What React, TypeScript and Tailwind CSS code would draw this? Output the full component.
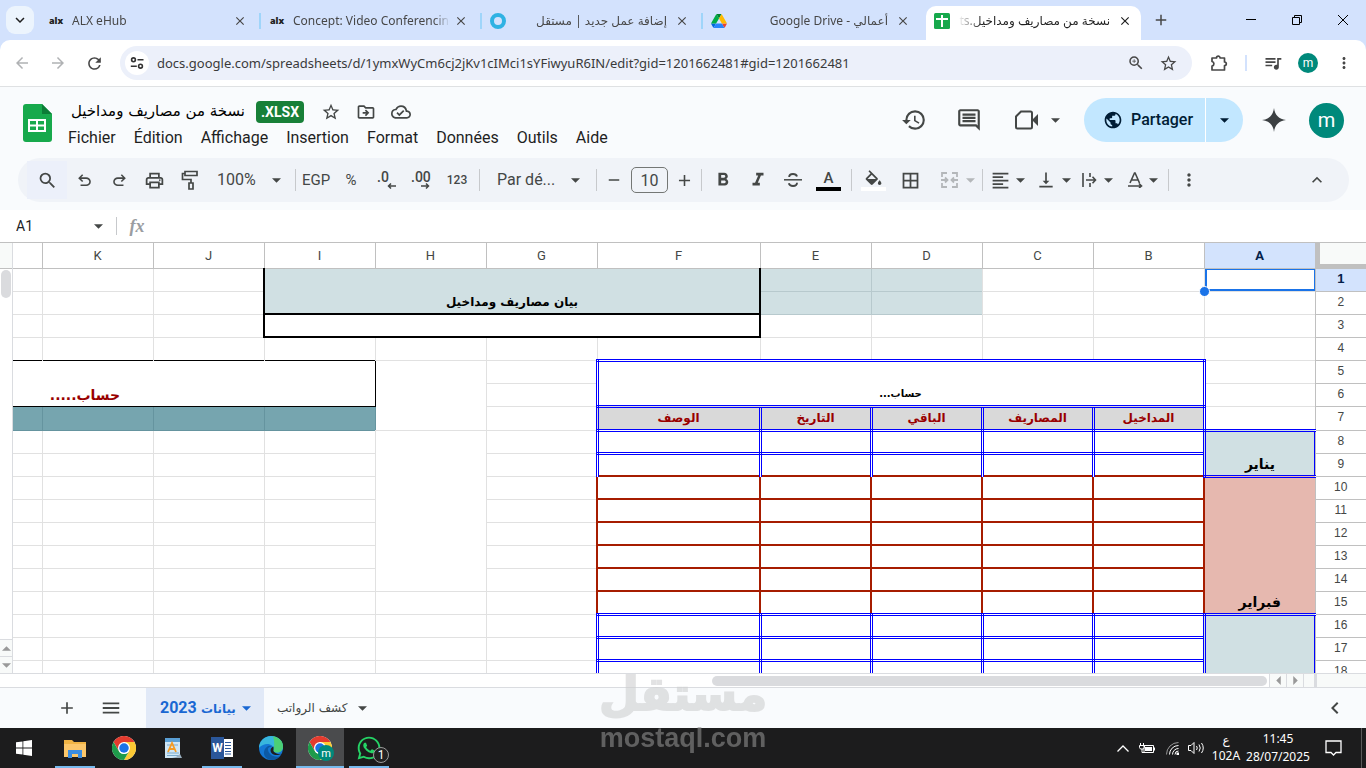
import React from "react";
import type { ReactNode } from "react";
import {
  MdAdd,
  MdArrowBack,
  MdArrowForward,
  MdBorderAll,
  MdClose,
  MdExpandLess,
  MdExpandMore,
  MdFormatAlignLeft,
  MdFormatBold,
  MdFormatItalic,
  MdHistory,
  MdMenu,
  MdMoreVert,
  MdOutlineCloudDone,
  MdOutlineComment,
  MdOutlineDriveFileMove,
  MdOutlinePrint,
  MdPublic,
  MdQueueMusic,
  MdRefresh,
  MdRemove,
  MdSearch,
  MdStarBorder,
  MdVerticalAlignBottom,
  MdZoomIn,
} from "react-icons/md";
import { FaWhatsapp } from "react-icons/fa";

/* ---------- small shared pieces ---------- */

function Caret({ className = "" }: { className?: string }) {
  return (
    <svg viewBox="0 0 10 5" className={`h-[5px] w-[9px] shrink-0 fill-current ${className}`}>
      <path d="M0 0h10L5 5z" />
    </svg>
  );
}

function IconButton({ label, className = "", children }: { label: string; className?: string; children: ReactNode }) {
  return (
    <button type="button" aria-label={label} className={`flex shrink-0 items-center justify-center ${className}`}>
      {children}
    </button>
  );
}

function SheetsFile({ className = "" }: { className?: string }) {
  return (
    <svg viewBox="0 0 29 38" className={className}>
      <path d="M3 0h16l10 10v25a3 3 0 0 1-3 3H3a3 3 0 0 1-3-3V3a3 3 0 0 1 3-3z" fill="#17a94c" />
      <path d="M19 0l10 10H19z" fill="#0c7c36" />
      <path d="M5 15h18v13H5zM7 17v3.500h6V17zm8 0v3.500h6V17zm-8 5.500V26h6v-3.500zm8 0V26h6v-3.500z" fill="#fff" fillRule="evenodd" />
    </svg>
  );
}

function ChromeLogo({ className = "" }: { className?: string }) {
  return (
    <svg viewBox="0 0 48 48" className={className}>
      <circle cx="24" cy="24" r="24" fill="#fff" />
      <path d="M24 12h20.800A24 24 0 0 0 3.200 12l10.400 18z" fill="#e33b2e" />
      <path d="M34.400 30L24 48a24 24 0 0 0 20.800-36H24z" fill="#fcc934" />
      <path d="M13.600 30L3.200 12A24 24 0 0 0 24 48l10.400-18a12 12 0 0 1-20.800 0z" fill="#1e9b4b" />
      <circle cx="24" cy="24" r="12" fill="#fff" />
      <circle cx="24" cy="24" r="9.500" fill="#1a73e8" />
    </svg>
  );
}

/* ---------- browser chrome ---------- */

const alxIcon = <span className="w-4 text-center text-[9px] leading-4 font-black text-[#222]">alx</span>;

const mostaqlIcon = (
  <svg viewBox="0 0 16 16" className="size-4">
    <circle cx="8" cy="8" r="6" fill="none" stroke="#2fb2e3" strokeWidth="4" />
  </svg>
);

const driveIcon = (
  <svg viewBox="0 0 87.300 78" className="h-[14px] w-4">
    <path d="M6.600 66.850l3.850 6.650c.8 1.400 1.950 2.500 3.300 3.300L27.500 53H0c0 1.550.4 3.100 1.200 4.500z" fill="#0066da" />
    <path d="M43.650 25L29.900 1.200c-1.350.8-2.500 1.900-3.300 3.300L1.200 48.500C.4 49.900 0 51.450 0 53h27.500z" fill="#00ac47" />
    <path d="M73.550 76.800c1.350-.8 2.500-1.900 3.300-3.300l1.600-2.750L86.100 57.500c.8-1.400 1.200-2.950 1.200-4.500H59.800l5.850 11.500z" fill="#ea4335" />
    <path d="M43.650 25L57.400 1.200C56.050.4 54.500 0 52.900 0H34.400c-1.600 0-3.150.45-4.500 1.200z" fill="#00832d" />
    <path d="M59.800 53H27.500L13.750 76.800c1.350.8 2.900 1.200 4.500 1.200h50.800c1.600 0 3.150-.45 4.500-1.200z" fill="#2684fc" />
    <path d="M73.400 26.500L60.700 4.500c-.8-1.400-1.950-2.500-3.300-3.300L43.650 25 59.800 53h27.450c0-1.550-.4-3.100-1.200-4.500z" fill="#ffba00" />
  </svg>
);

const sheetsTabIcon = (
  <svg viewBox="0 0 16 16" className="size-4">
    <rect width="16" height="16" rx="1.500" fill="#17a94c" />
    <path d="M7 2h2v12H7zM2 5h12v2H2z" fill="#fff" />
  </svg>
);

type BrowserTab = { title: string; icon: ReactNode; rtl?: boolean; active?: boolean; line?: boolean };

const browserTabs: BrowserTab[] = [
  { title: "ALX eHub", icon: alxIcon, line: true },
  { title: "Concept: Video Conferencing", icon: alxIcon, line: true },
  { title: "إضافة عمل جديد | مستقل", icon: mostaqlIcon, rtl: true, line: true },
  { title: "أعمالي - Google Drive", icon: driveIcon, rtl: true },
  { title: "نسخة من مصاريف ومداخيل.ts", icon: sheetsTabIcon, rtl: true, active: true },
];

function TabStrip() {
  return (
    <div className="flex h-10 shrink-0 bg-[#d3e2fd] font-['Noto_Sans','DejaVu_Sans',sans-serif] text-[12px] text-[#474747]">
      <div className="flex w-10 shrink-0 items-center pl-[6px]">
        <IconButton label="Rechercher dans les onglets" className="size-7 rounded-[9px] bg-[#ecf4fd] text-[#1f1f1f]">
          <MdExpandMore className="size-[18px]" />
        </IconButton>
      </div>
      {browserTabs.map((tab) => (
        <div key={tab.title} className="flex w-[221px] min-w-0 items-end">
          <div
            className={
              tab.active
                ? "ml-[2px] flex h-[34px] w-[215px] items-center rounded-t-[10px] bg-white pr-[9px] pb-1 pl-2 text-[#1f1f1f]"
                : "flex h-[34px] w-full items-center pb-1 pl-2"
            }
          >
            <span className="flex w-4 shrink-0 justify-center">{tab.icon}</span>
            <span
              dir={tab.rtl ? "rtl" : "ltr"}
              className={
                tab.rtl
                  ? "mr-2 ml-2 flex-1 overflow-hidden whitespace-nowrap [mask-image:linear-gradient(to_right,transparent,#000_24px)]"
                  : "mr-1 ml-2 flex-1 overflow-hidden whitespace-nowrap [mask-image:linear-gradient(to_left,transparent,#000_16px)]"
              }
            >
              {tab.title}
            </span>
            <IconButton label="Fermer l'onglet">
              <MdClose className="size-[14px]" />
            </IconButton>
            {!tab.active && <span className={tab.line ? "ml-3 h-4 w-[2px] bg-[#9fd5fa]" : "ml-3 h-4 w-[2px]"} />}
          </div>
        </div>
      ))}
      <IconButton label="Nouvel onglet" className="ml-px w-[30px]">
        <MdAdd className="size-[18px]" />
      </IconButton>
      <div className="ml-auto flex items-center text-black">
        <IconButton label="Réduire" className="h-full w-[46px]">
          <svg viewBox="0 0 10 10" className="size-[10px]"><path d="M0 4.500h10" stroke="currentColor" /></svg>
        </IconButton>
        <IconButton label="Restaurer" className="h-full w-[46px]">
          <svg viewBox="0 0 10 10" className="size-[10px]" fill="none" stroke="currentColor"><path d="M.5 2.500h7v7h-7zM2.500 2V.5h7v7H8" /></svg>
        </IconButton>
        <IconButton label="Fermer" className="h-full w-[46px]">
          <svg viewBox="0 0 10 10" className="size-[10px]"><path d="M0 0l10 10M10 0L0 10" stroke="currentColor" /></svg>
        </IconButton>
      </div>
    </div>
  );
}

function AddressBar() {
  return (
    <div className="bg-[#d3e2fd]">
      <div className="flex h-[47px] items-center rounded-t-[10px] border-b border-[#dfe1e3] bg-white pl-1 text-[#474747]">
        <IconButton label="Retour" className="w-9 text-[#b0b2b4]"><MdArrowBack className="size-[18px]" /></IconButton>
        <IconButton label="Avancer" className="w-9 text-[#b0b2b4]"><MdArrowForward className="size-[18px]" /></IconButton>
        <IconButton label="Actualiser" className="w-9"><MdRefresh className="size-[19px]" /></IconButton>
        <div className="ml-2 flex h-[34px] flex-1 items-center rounded-full bg-[#ecf0fa] pr-2 pl-[5px]">
          <IconButton label="Informations sur le site" className="size-6 rounded-full bg-white">
            <svg viewBox="0 0 14 14" className="size-[14px]" fill="none" stroke="#333" strokeWidth="1.600">
              <circle cx="3.500" cy="3.800" r="1.900" />
              <circle cx="10.500" cy="10.200" r="1.900" />
              <path d="M7.500 3.800h6M.8 10.200h6" />
            </svg>
          </IconButton>
          <input
            aria-label="Barre d'adresse"
            defaultValue="docs.google.com/spreadsheets/d/1ymxWyCm6cj2jKv1cIMci1sYFiwyuR6IN/edit?gid=1201662481#gid=1201662481"
            className="ml-2 h-6 min-w-0 flex-1 bg-transparent font-['Noto_Sans',sans-serif] text-[13px] text-[#3a3a3a] outline-none"
          />
          <IconButton label="Zoom" className="w-8"><MdZoomIn className="size-[18px]" /></IconButton>
          <IconButton label="Ajouter aux favoris" className="w-8"><MdStarBorder className="size-[19px]" /></IconButton>
        </div>
        <IconButton label="Extensions" className="ml-2 w-[37px]">
          <svg viewBox="0 0 18 18" className="size-[18px]" fill="none" stroke="currentColor" strokeWidth="1.700" strokeLinejoin="round">
            <path d="M2 4h4.500a1.800 1.800 0 0 1 3.600 0H14.500v4a1.800 1.800 0 0 1 0 3.600V16H2v-3.800a2.400 2.400 0 0 0 0-4.700z" />
          </svg>
        </IconButton>
        <span className="mx-2 h-4 w-[2px] bg-[#d3e2fd]" />
        <IconButton label="Commandes multimédias" className="w-[35px]"><MdQueueMusic className="size-[20px]" /></IconButton>
        <IconButton label="Profil" className="mx-2 size-5 rounded-full bg-[#00897b] font-[Roboto,sans-serif] text-[12px] text-white">m</IconButton>
        <IconButton label="Menu Chrome" className="mr-[6px] ml-[2px] w-8"><MdMoreVert className="size-[18px]" /></IconButton>
      </div>
    </div>
  );
}

/* ---------- document header ---------- */

const menus = ["Fichier", "Édition", "Affichage", "Insertion", "Format", "Données", "Outils", "Aide"];

function DocHeader() {
  return (
    <header className="flex h-[71px] shrink-0 items-start bg-[#f9fbfd] pt-[11px] pr-[22px] pl-[23px] text-[#444746]">
      <SheetsFile className="mt-[6px] h-[38px] w-[29px] shrink-0" />
      <div className="ml-[15px]">
        <div className="flex h-7 items-center">
          <input
            aria-label="Titre du document"
            dir="rtl"
            defaultValue="نسخة من مصاريف ومداخيل"
            className="h-7 w-[178px] bg-transparent pb-[2px] font-['DejaVu_Sans',sans-serif] text-[15px] text-black outline-none"
          />
          <span className="ml-[11px] flex h-[22px] w-12 items-center justify-center rounded bg-[#188038] font-[Roboto,sans-serif] text-[14px] font-bold text-white">.XLSX</span>
          <IconButton label="Suivre" className="ml-[9px] w-[35px]"><MdStarBorder className="size-[20px]" /></IconButton>
          <IconButton label="Déplacer" className="w-[35px]"><MdOutlineDriveFileMove className="size-[20px]" /></IconButton>
          <IconButton label="État du document" className="w-[35px]"><MdOutlineCloudDone className="size-[20px]" /></IconButton>
        </div>
        <nav className="flex h-6 items-center gap-[18px] pl-px font-[Roboto,sans-serif] text-[16px] text-[#1f1f1f]">
          {menus.map((m) => (
            <button key={m} type="button">{m}</button>
          ))}
        </nav>
      </div>
      <div className="ml-auto flex h-11 items-center">
        <IconButton label="Historique" className="w-[55px]"><MdHistory className="size-[26px]" /></IconButton>
        <IconButton label="Commentaires" className="w-[55px]"><MdOutlineComment className="size-[26px]" /></IconButton>
        <button type="button" aria-label="Appel vidéo" className="flex w-16 items-center justify-end gap-3">
          <svg viewBox="0 0 24 20" className="h-5 w-6" fill="none" stroke="currentColor" strokeWidth="2">
            <path d="M6 1.500h9.500a1.500 1.500 0 0 1 1.500 1.500v14a1.500 1.500 0 0 1-1.500 1.500h-13A1.500 1.500 0 0 1 1 17V6.500z" />
            <path d="M17 10l6-6v12z" fill="currentColor" stroke="none" />
          </svg>
          <Caret className="h-1 w-2" />
        </button>
        <div className="ml-6 flex h-11 w-[159px] overflow-hidden rounded-full bg-[#c2e7ff] text-[#001d35]">
          <button type="button" className="flex flex-1 items-center gap-2 border-r border-white pl-[19px] font-[Roboto,sans-serif] text-[16px] font-medium">
            <MdPublic className="size-5 shrink-0" />
            Partager
          </button>
          <IconButton label="Options de partage" className="w-[37px]"><Caret className="h-1 w-2" /></IconButton>
        </div>
        <IconButton label="Gemini" className="ml-[19px] w-6">
          <svg viewBox="0 0 24 24" className="size-6 fill-[#3c4043]"><path d="M12 0c.8 7 5 11.200 12 12-7 .8-11.200 5-12 12-.8-7-5-11.200-12-12C7 11.200 11.200 7 12 0z" /></svg>
        </IconButton>
        <IconButton label="Compte Google" className="ml-[23px] size-[35px] rounded-full bg-[#00897b] font-[Roboto,sans-serif] text-[20px] text-white">m</IconButton>
      </div>
    </header>
  );
}

function Rule() {
  return <span className="h-[22px] w-px shrink-0 bg-[#c7c9cc]" />;
}

const undoPath =
  "M7 19v-2h7.100q1.575 0 2.738-1T18 13.500t-1.162-2.500T14.100 10H7.800l2.600 2.600L9 14 4 9l5-5 1.400 1.400L7.800 8h6.300q2.425 0 4.163 1.575T20 13.500t-1.737 3.925T14.100 19z";

function Decimal({ text, back }: { text: string; back?: boolean }) {
  return (
    <span className="flex w-[19px] flex-col items-start font-[Roboto,sans-serif] text-[14px] leading-3 font-medium">
      {text}
      <svg viewBox="0 0 9 6" className="h-[6px] w-[9px] self-end" fill="none" stroke="currentColor" strokeWidth="1.500">
        <path d={back ? "M9 3H1.500M4 .5L1.500 3 4 5.500" : "M0 3h7.500M5 .5L7.500 3 5 5.500"} />
      </svg>
    </span>
  );
}

function Toolbar() {
  return (
    <div className="shrink-0 bg-[#f9fbfd] pr-[17px] pb-2 pl-[18px]">
      <div className="flex h-11 items-center rounded-full bg-[#f0f3f8] pr-[14px] pl-[9px] font-[Roboto,sans-serif] text-[16px] text-[#444746]">
        <IconButton label="Rechercher" className="h-[38px] w-10 bg-[#ecf0fa]"><MdSearch className="size-[21px]" /></IconButton>
        <IconButton label="Annuler" className="w-[35px]"><svg viewBox="0 0 24 24" className="size-[19px] fill-current"><path d={undoPath} /></svg></IconButton>
        <IconButton label="Rétablir" className="w-[35px]"><svg viewBox="0 0 24 24" className="size-[19px] -scale-x-100 fill-current"><path d={undoPath} /></svg></IconButton>
        <IconButton label="Imprimer" className="w-[35px]"><MdOutlinePrint className="size-[21px]" /></IconButton>
        <IconButton label="Copier la mise en forme" className="w-[35px]">
          <svg viewBox="0 0 18 20" className="h-5 w-[18px]" fill="none" stroke="currentColor" strokeWidth="1.700">
            <path d="M4 1.500h12v4H4zM4 3.500H1.500v6H10v3.500M8 13h4v6H8z" />
          </svg>
        </IconButton>
        <button type="button" className="flex w-[88px] items-center justify-between pr-[14px] pl-[10px]">100% <Caret /></button>
        <Rule />
        <button type="button" className="w-10 text-[15px]">EGP</button>
        <button type="button" className="w-[30px] text-[15px]">%</button>
        <IconButton label="Réduire les décimales" className="w-[37px] pl-1"><Decimal text=".0" back /></IconButton>
        <IconButton label="Augmenter les décimales" className="w-[35px]"><Decimal text=".00" /></IconButton>
        <button type="button" className="w-[38px] text-[12px] font-medium">123</button>
        <span className="w-[3px]" />
        <Rule />
        <button type="button" className="flex w-[116px] items-center justify-between pr-4 pl-[17px]">Par dé... <Caret /></button>
        <Rule />
        <IconButton label="Réduire la taille" className="w-[34px]"><MdRemove className="size-[18px]" /></IconButton>
        <input aria-label="Taille de police" defaultValue="10" className="h-[26px] w-[37px] rounded-[5px] border border-[#747775] bg-transparent text-center text-[16px] outline-none" />
        <IconButton label="Augmenter la taille" className="w-[33px]"><MdAdd className="size-[19px]" /></IconButton>
        <Rule />
        <IconButton label="Gras" className="ml-[3px] w-[35px]"><MdFormatBold className="size-[22px]" /></IconButton>
        <IconButton label="Italique" className="w-[35px]"><MdFormatItalic className="size-[22px]" /></IconButton>
        <IconButton label="Barré" className="w-[35px]">
          <svg viewBox="0 0 18 16" className="h-4 w-[18px]" fill="none" stroke="currentColor" strokeWidth="1.900">
            <path d="M13 4.500C12.500 2.800 11 2 9 2 6.800 2 5.200 3 5.200 5M13 10.800c0 2-1.600 3.200-4 3.200-2.200 0-3.700-.9-4.200-2.700" />
            <path d="M0 7.800h18" strokeWidth="1.500" />
          </svg>
        </IconButton>
        <button type="button" aria-label="Couleur du texte" className="flex w-[37px] flex-col items-center text-[15px] leading-4 font-medium">
          A<span className="mt-px h-1 w-[25px] bg-black" />
        </button>
        <span className="w-1" />
        <Rule />
        <IconButton label="Couleur de remplissage" className="ml-[3px] w-[37px] flex-col">
          <svg viewBox="0 0 24 18" className="mb-px h-4 w-[21px] fill-current">
            <path d="M16.560 8.940L7.620 0 6.210 1.410l2.380 2.380-5.150 5.150a1.490 1.490 0 0 0 0 2.120l5.500 5.500c.29.29.68.44 1.060.44s.77-.15 1.060-.44l5.500-5.500c.59-.58.59-1.530 0-2.120zM5.210 10L10 5.210 14.790 10zM19 11.500s-2 2.170-2 3.500c0 1.100.9 2 2 2s2-.9 2-2c0-1.330-2-3.500-2-3.500z" />
          </svg>
          <span className="h-1 w-[25px] bg-white" />
        </IconButton>
        <IconButton label="Bordures" className="w-[37px]"><MdBorderAll className="size-[21px]" /></IconButton>
        <IconButton label="Fusionner" className="w-[53px] gap-2 pl-1 text-[#b4b7ba]">
          <svg viewBox="0 0 17 16" className="h-4 w-[17px]" fill="none" stroke="currentColor" strokeWidth="1.800">
            <path d="M6 1H1v4M1 11v4h5M11 1h5v4M16 11v4h-5M0 8h6M4 5.500L6.500 8 4 10.500M17 8h-6M13 5.500L10.500 8l2.500 2.500" />
          </svg>
          <Caret />
        </IconButton>
        <Rule />
        <IconButton label="Alignement horizontal" className="w-[49px] gap-[5px]"><MdFormatAlignLeft className="size-[21px]" /><Caret /></IconButton>
        <IconButton label="Alignement vertical" className="w-[43px] gap-[6px]"><MdVerticalAlignBottom className="size-[20px]" /><Caret /></IconButton>
        <IconButton label="Retour à la ligne" className="w-[45px] gap-[7px]">
          <svg viewBox="0 0 15 14" className="h-[14px] w-[15px]" fill="none" stroke="currentColor" strokeWidth="1.600"><path d="M1 0v14M8 0v4M8 10v4M4 7h9M10.500 3.800L13.500 7l-3 3.200" /></svg>
          <Caret />
        </IconButton>
        <IconButton label="Rotation du texte" className="w-[45px] gap-[6px]">
          <svg viewBox="0 0 15 16" className="h-4 w-[15px]" fill="none" stroke="currentColor" strokeWidth="1.600"><path d="M2 11L6.500 1h.6L11.500 11M3.500 8h6.500M0 14h13M11 11.500l2.500 2.500-2.500 2" /></svg>
          <Caret />
        </IconButton>
        <span className="w-[3px]" />
        <Rule />
        <IconButton label="Plus" className="w-[39px]"><MdMoreVert className="size-[20px]" /></IconButton>
        <IconButton label="Masquer les menus" className="ml-auto w-9"><MdExpandLess className="size-[20px]" /></IconButton>
      </div>
    </div>
  );
}

function FormulaBar() {
  return (
    <div className="flex h-8 shrink-0 items-center bg-white">
      <input aria-label="Zone de nom" defaultValue="A1" className="w-[94px] pl-4 font-[Roboto,sans-serif] text-[14px] text-[#202124] outline-none" />
      <Caret className="text-[#444746]" />
      <span className="ml-[13px] h-[18px] w-px bg-[#c7c9cc]" />
      <label htmlFor="formula" className="w-10 text-center font-['Liberation_Serif',serif] text-[18px] font-bold text-[#9a9da1] italic">fx</label>
      <input id="formula" className="min-w-0 flex-1 outline-none" />
    </div>
  );
}

/* ---------- spreadsheet ---------- */

const grid = "border-b border-l border-[#e1e1e1]";
const shaded = "border-b border-l border-[#b7c9cd] bg-[#d0e0e3]";
const thick = "border-2 border-black";
const blue = "border-[3px] border-double border-[#0000ff]";
const blueOpen = "border-[3px] border-b-0 border-double border-[#0000ff]";
const red = "border-2 border-[#a61c00]";
const teal = "border-b border-l border-[#65949f] bg-[#76a5af]";
const label = "px-0 pt-0 pb-[2px] align-bottom text-center font-['DejaVu_Sans',sans-serif] font-bold leading-[18px]";

const columns = ["A", "B", "C", "D", "E", "F", "G", "H", "I", "J", "K", "L"];

function cellsOf(names: string[], cls: string) {
  return names.map((n) => <td key={n} className={cls} />);
}

const headings = ["المداخيل", "المصاريف", "الباقي", "التاريخ", "الوصف"];

function rowCells(row: number): ReactNode {
  if (row === 1) {
    return (
      <>
        <td className={`relative ${grid}`}>
          <span className="absolute inset-0 border-t border-r border-b-2 border-l-2 border-[#1a73e8]" />
          <span className="absolute -bottom-[6px] -left-[6px] size-[11px] rounded-full border border-white bg-[#1a73e8]" />
        </td>
        {cellsOf(["B", "C"], grid)}
        {cellsOf(["D", "E"], shaded)}
        <td colSpan={4} rowSpan={2} className={`border-2 border-t-0 border-black bg-[#d0e0e3] text-[12px] ${label}`}>بيان مصاريف ومداخيل</td>
        {cellsOf(["J", "K", "L"], grid)}
      </>
    );
  }
  if (row === 2) {
    return (
      <>
        {cellsOf(["A", "B", "C"], grid)}
        {cellsOf(["D", "E"], shaded)}
        {cellsOf(["J", "K", "L"], grid)}
      </>
    );
  }
  if (row === 3) {
    return (
      <>
        {cellsOf(["A", "B", "C", "D", "E"], grid)}
        <td colSpan={4} className={thick} />
        {cellsOf(["J", "K", "L"], grid)}
      </>
    );
  }
  if (row === 4) {
    return (
      <>
        {cellsOf(columns.slice(0, 8), grid)}
        {cellsOf(columns.slice(8), "border-l border-[#e1e1e1]")}
      </>
    );
  }
  if (row === 5) {
    return (
      <>
        <td className={grid} />
        <td colSpan={5} rowSpan={2} className={`${blue} text-[10px] ${label}`}>حساب...</td>
        <td className={grid} />
        <td rowSpan={3} className="border-b border-[#e1e1e1]" />
        <td colSpan={4} rowSpan={2} className={`border border-black text-[14px] text-[#990000] ${label}`}>حساب.....</td>
      </>
    );
  }
  if (row === 6) return cellsOf(["A", "G"], grid);
  if (row === 7) {
    return (
      <>
        <td className={grid} />
        {headings.map((h) => (
          <th key={h} scope="col" className={`${blue} bg-[#d9d9d9] text-[12px] text-[#990000] ${label}`}>{h}</th>
        ))}
        <td className={grid} />
        <td className="border-r border-b border-l border-[#65949f] bg-[#76a5af]" />
        {cellsOf(["J", "K", "L"], teal)}
      </>
    );
  }
  const month =
    row === 8 ? (
      <td rowSpan={2} className={`border-y-[3px] border-l-[3px] border-double border-[#0000ff] bg-[#d0e0e3] text-[14px] shadow-[inset_-1px_0_0_#0000ff] ${label}`}>يناير</td>
    ) : row === 10 ? (
      <td rowSpan={6} className={`bg-[#e6b8af] text-[14px] ${label}`}>فبراير</td>
    ) : row === 16 ? (
      <td rowSpan={3} className="border-t-[3px] border-l-[3px] border-double border-[#0000ff] bg-[#d0e0e3] shadow-[inset_-1px_0_0_#0000ff]" />
    ) : null;
  const entry = row === 9 ? blueOpen : row >= 10 && row <= 15 ? red : blue;
  return (
    <>
      {month}
      {cellsOf(columns.slice(1, 6), entry)}
      <td className={grid} />
      {row === 8 && <td rowSpan={7} className={grid} />}
      {row > 14 && <td className={grid} />}
      {cellsOf(columns.slice(8), grid)}
    </>
  );
}

function Grid() {
  return (
    <div className="flex min-h-0 flex-1 border-t border-[#c0c0c0] bg-white">
      <div className="flex w-[13px] shrink-0 flex-col border-r border-[#dadce0]">
        <div className="h-[26px] border-b border-[#c0c0c0] bg-[#f8faf9]" />
        <div className="mx-px mt-px h-7 rounded-full bg-[#dadbde]" />
        <IconButton label="Défiler vers le haut" className="mt-auto h-[17px] border-t border-[#dadce0] bg-[#f8faf9] text-[#999]"><Caret className="h-[3px] w-[6px] rotate-180" /></IconButton>
        <IconButton label="Défiler vers le bas" className="h-[17px] border-t border-[#dadce0] bg-[#f8faf9] text-[#999]"><Caret className="h-[3px] w-[6px]" /></IconButton>
      </div>
      <div dir="rtl" className="min-w-0 flex-1 overflow-hidden">
        <table className="w-[1571px] table-fixed border-collapse">
          <colgroup>
            <col className="w-[51px]" />
            {columns.map((c) => (
              <col key={c} className={c === "F" ? "w-[163px]" : c === "L" ? "w-[247px]" : "w-[111px]"} />
            ))}
          </colgroup>
          <thead>
            <tr className="h-[25px] font-[Roboto,sans-serif] text-[13px] text-[#444746]">
              <td className="border-b border-l border-[#c0c0c0] bg-[#f8faf9] shadow-[inset_4px_-4px_0_#c0c0c0]" />
              {columns.map((c) => (
                <th
                  key={c}
                  scope="col"
                  className={
                    c === "A"
                      ? "border-b border-l border-[#c0c0c0] bg-[#d3e3fd] p-0 font-bold text-[#041e49]"
                      : "border-b border-l border-[#c0c0c0] p-0 font-normal"
                  }
                >
                  {c === "L" ? null : c}
                </th>
              ))}
            </tr>
          </thead>
          <tbody className="text-black">
            {Array.from({ length: 18 }, (_, i) => i + 1).map((row) => (
              <tr key={row} className={row === 7 ? "h-6" : "h-[23px]"}>
                <th
                  scope="row"
                  className={
                    row === 1
                      ? "border-b border-l border-[#c0c0c0] bg-[#d3e3fd] px-0 pt-0 pb-[2px] font-['Liberation_Sans',sans-serif] text-[13px] leading-4 font-bold text-[#041e49]"
                      : "border-b border-l border-[#c0c0c0] px-0 pt-0 pb-[2px] font-['Liberation_Sans',sans-serif] text-[12px] leading-4 font-normal text-[#444746]"
                  }
                >
                  {row}
                </th>
                {rowCells(row)}
              </tr>
            ))}
          </tbody>
        </table>
      </div>
    </div>
  );
}

function HorizontalScroll() {
  return (
    <div className="flex h-[15px] shrink-0 border-y border-[#dadce0] bg-white">
      <div className="flex flex-1 items-center justify-end"><span className="mr-[2px] h-[10px] w-[555px] rounded-full bg-[#dadbde]" /></div>
      <IconButton label="Défiler à gauche" className="w-[17px] border-l border-[#dadce0] bg-[#f8faf9] text-[#999]"><Caret className="h-[3px] w-[6px] rotate-90" /></IconButton>
      <IconButton label="Défiler à droite" className="w-[17px] border-l border-[#dadce0] bg-[#f8faf9] text-[#999]"><Caret className="h-[3px] w-[6px] -rotate-90" /></IconButton>
      <span className="w-[11px] border-l border-[#dadce0] bg-[#f8faf9]" />
      <span className="w-[52px] border-l-[3px] border-[#dadce0] bg-[#f8faf9]" />
    </div>
  );
}

function SheetTabs() {
  return (
    <div className="flex h-10 shrink-0 items-center bg-[#f9fbfd] pl-[49px] font-['DejaVu_Sans',sans-serif] text-[12px] text-[#444746]">
      <IconButton label="Ajouter une feuille" className="w-9"><MdAdd className="size-[20px]" /></IconButton>
      <IconButton label="Toutes les feuilles" className="ml-2 w-9"><MdMenu className="size-[22px]" /></IconButton>
      <button type="button" className="ml-[17px] flex h-full w-[118px] items-center justify-between bg-[#e1e9f7] pr-[13px] pl-[14px] font-bold text-[#1967d2]">
        <span dir="rtl" className="whitespace-nowrap">بيانات <span className="font-[Roboto,sans-serif] text-[16px]">2023</span></span>
        <Caret />
      </button>
      <button type="button" className="flex h-full items-center gap-[10px] pl-[13px]">
        <span dir="rtl" className="whitespace-nowrap">كشف الرواتب</span>
        <Caret />
      </button>
      <IconButton label="Afficher le panneau latéral" className="mr-[19px] ml-auto w-6"><MdExpandLess className="size-6 -rotate-90" /></IconButton>
    </div>
  );
}

/* ---------- desktop task bar ---------- */

const folderIcon = (
  <svg viewBox="0 0 22 19" className="h-[19px] w-[22px]">
    <path d="M0 1h8l2 2h12v15H0z" fill="#f0b445" />
    <path d="M0 5h22v13H0z" fill="#fbc76b" />
    <path d="M4 19v-8h14v8h-4v-4H8v4z" fill="#3b8de0" />
  </svg>
);

const wordpadIcon = (
  <svg viewBox="0 0 18 22" className="h-[22px] w-[18px]">
    <path d="M1 1h15v20H1z" fill="#cfe6f5" />
    <path d="M1 1h15v4H1z" fill="#5a9fd4" />
    <path d="M3 8h11M3 16h12M3 18.500h12" stroke="#7aa9cb" />
    <path d="M4 15L8 6l4 9M5.500 12h5" fill="none" stroke="#f59b23" strokeWidth="1.800" />
    <path d="M12 20l4-3 2 4H8z" fill="#9bb0c0" />
  </svg>
);

const wordIcon = (
  <span className="flex h-[22px] w-[22px] items-center">
    <span className="flex h-[22px] w-[13px] items-center justify-center bg-[#2b579a] font-[Roboto,sans-serif] text-[12px] font-bold text-white">W</span>
    <svg viewBox="0 0 9 18" className="h-[18px] w-[9px]"><path d="M0 0h9v18H0z" fill="#fff" /><path d="M1 3.500h6M1 6.500h6M1 9.500h6M1 12.500h6M1 15h6" stroke="#2b579a" /></svg>
  </span>
);

const edgeIcon = (
  <svg viewBox="0 0 24 24" className="size-6">
    <circle cx="12" cy="12" r="12" fill="#1477d4" />
    <path d="M0 12C0 5 5.500 0 12 0s12 4.500 12 10.500c0 4-3 6-6 6-2.500 0-4-1-3.500-2.500C15.500 9 9 6.500 4 9c-2 1-3.500 2-4 3z" fill="#38b6dd" />
    <path d="M14 .2C20 1 24 5 24 10.500c0 4-3 6-6 6-2.500 0-4-1-3.500-2.500C16 10 15 3 14 .2z" fill="#4bcf74" />
    <path d="M9 13c0 5 5 8.500 11 7.500l2-1.500c-3 5-10 6.500-14 3.500-4.500-3-4-9.500 1-12.500 0 0 2-1 4 .5-2 0-4 1-4 2.500z" fill="#0c59a4" />
    <path d="M14.500 10.500c-3 1-4 4.500-1.500 7 2.500 2 7 2 9.500 0-1 .8-3 1-5 0-3-1-3.500-3-3-4z" fill="#1e1e1e" />
  </svg>
);

const profileChromeIcon = (
  <span className="relative">
    <ChromeLogo className="size-6" />
    <span className="absolute top-[9px] left-[10px] flex size-4 items-center justify-center rounded-full bg-[#00897b] font-[Roboto,sans-serif] text-[11px] leading-none text-white">m</span>
  </span>
);

const whatsappIcon = (
  <span className="relative">
    <FaWhatsapp className="size-[26px] text-[#25d366]" />
    <span className="absolute top-[12px] left-[17px] flex size-4 items-center justify-center rounded-full border border-[#9a9a9a] bg-[#222] font-[Roboto,sans-serif] text-[12px] leading-none text-white">1</span>
  </span>
);

const apps = [
  { name: "Explorateur de fichiers", icon: folderIcon, style: "after:w-10" },
  { name: "Google Chrome", icon: <ChromeLogo className="size-6" />, style: "after:w-0" },
  { name: "WordPad", icon: wordpadIcon, style: "after:w-0" },
  { name: "Word", icon: wordIcon, style: "after:w-10" },
  { name: "Microsoft Edge", icon: edgeIcon, style: "after:w-0" },
  { name: "Google Chrome, profil m", icon: profileChromeIcon, style: "bg-[#4a4b4d] after:w-12" },
  { name: "WhatsApp", icon: whatsappIcon, style: "after:w-10" },
];

function TaskBar() {
  return (
    <footer className="flex h-10 shrink-0 items-center bg-[#1c1c1d] font-['Noto_Sans','DejaVu_Sans',sans-serif] text-[12px] text-white">
      <IconButton label="Démarrer" className="mr-[3px] h-full w-12">
        <svg viewBox="0 0 16 16" className="size-4 fill-white"><path d="M0 2.300L6.500 1.400v6.200H0zM7.300 1.300L16 0v7.600H7.300zM0 8.400h6.500v6.200L0 13.700zM7.300 8.400H16V16l-8.700-1.200z" /></svg>
      </IconButton>
      <div className="flex h-full gap-px">
        {apps.map((app) => (
          <button
            key={app.name}
            type="button"
            aria-label={app.name}
            className={`relative flex w-12 items-center justify-center after:absolute after:bottom-0 after:h-[2px] after:bg-[#76b9ed] ${app.style}`}
          >
            {app.icon}
          </button>
        ))}
      </div>
      <div className="ml-auto flex h-full items-center">
        <IconButton label="Icônes cachées" className="w-6">
          <svg viewBox="0 0 12 7" className="h-[7px] w-3" fill="none" stroke="#fff" strokeWidth="1.300"><path d="M.5 6.500L6 1l5.500 5.500" /></svg>
        </IconButton>
        <IconButton label="Batterie" className="w-6">
          <svg viewBox="0 0 16 11" className="h-[11px] w-4" fill="none" stroke="#fff">
            <path d="M5 2.500h9.500v7h-9.500zM15.500 4.500v3M1.500 0v2M4.500 0v2M.5 2.500h5v2l-1 1.500h-3l-1-1.500zM3 6v3.500h2" />
            <path d="M6 4h7v4H6z" fill="#fff" stroke="none" />
          </svg>
        </IconButton>
        <IconButton label="Wi-Fi" className="ml-px w-6">
          <svg viewBox="0 0 13 13" className="size-[13px]" fill="none" stroke="#fff">
            <path d="M.5 12.500a12 12 0 0 1 12-12" stroke="#999" />
            <path d="M3.500 12.500a9 9 0 0 1 9-9M6.500 12.500a6 6 0 0 1 6-6M9 12.500A3.500 3.500 0 0 1 12.500 9" />
            <path d="M10.500 10.500h2.500V13h-2.500z" fill="#fff" stroke="none" />
          </svg>
        </IconButton>
        <IconButton label="Volume" className="w-6">
          <svg viewBox="0 0 17 14" className="h-[14px] w-[17px]" fill="none" stroke="#fff">
            <path d="M.5 4.500h2.500l3-3v11l-3-3H.5zM8.500 5q1.500 2 0 4M11 3.500q2.500 3.500 0 7M13.500 2q3.500 5 0 10" />
          </svg>
        </IconButton>
        <button type="button" className="flex w-9 flex-col items-center leading-4"><span>ع</span><span>102A</span></button>
        <button type="button" className="flex w-[68px] flex-col items-center leading-[18px]"><span>11:45</span><span>28/07/2025</span></button>
        <IconButton label="Notifications" className="w-[42px]">
          <svg viewBox="0 0 17 17" className="size-[17px]" fill="none" stroke="#fff" strokeWidth="1.300"><path d="M1 1h15v11.500h-5L8.500 15 6 12.500H1z" /></svg>
        </IconButton>
        <span className="mr-[4px] ml-[7px] h-full w-px bg-[#5a5a5a]" />
      </div>
    </footer>
  );
}

function Watermark() {
  return (
    <div className="pointer-events-none absolute bottom-4 left-1/2 flex -translate-x-1/2 flex-col items-center text-[#8e8e8e] opacity-60">
      <span dir="rtl" className="mb-[5px] font-['DejaVu_Sans',sans-serif] text-[46px] leading-[50px] font-bold text-[#cfd0d1] [-webkit-text-stroke:2px_#cfd0d1]">مستقل</span>
      <span className="font-['Liberation_Sans',sans-serif] text-[27px] leading-7 font-bold">mostaql.com</span>
    </div>
  );
}

export default function App() {
  return (
    <div className="relative flex h-screen min-h-[480px] flex-col overflow-hidden bg-white">
      <TabStrip />
      <AddressBar />
      <DocHeader />
      <Toolbar />
      <FormulaBar />
      <Grid />
      <HorizontalScroll />
      <SheetTabs />
      <TaskBar />
      <Watermark />
    </div>
  );
}
